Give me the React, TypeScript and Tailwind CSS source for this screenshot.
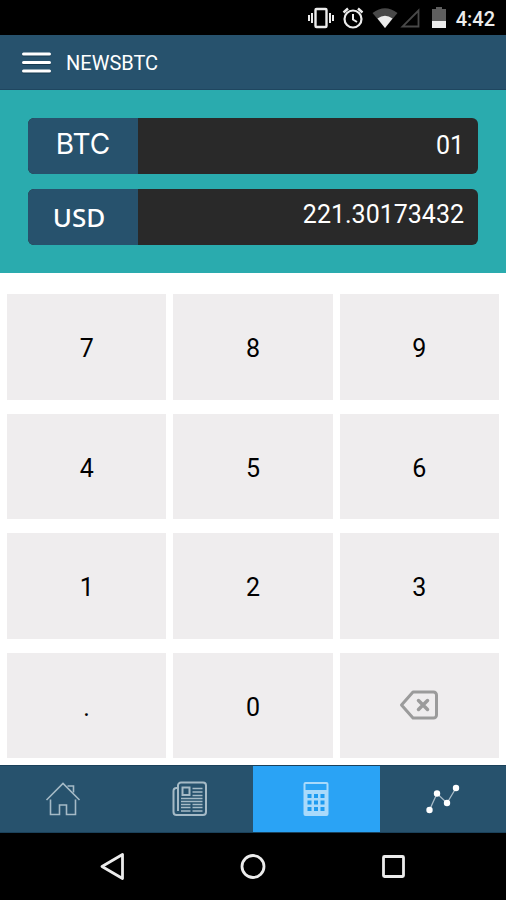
import { useState } from "react";

const RATE = 221.30173432;

const KEYS = ["7", "8", "9", "4", "5", "6", "1", "2", "3", ".", "0"];

const KEY_CLASS =
  "flex items-center justify-center bg-[#efedee] text-[25px] text-black active:bg-[#dddbdc]";

function StatusBar() {
  return (
    <div className="flex h-[35px] items-center justify-end bg-black pr-[11px] text-[#ececec]">
      <svg width="26" height="22" viewBox="0 0 26 22" fill="none" stroke="currentColor">
        <rect x="7.5" y="2" width="11" height="18" rx="1" strokeWidth="2.4" />
        <path d="M4 6v10M22 6v10" strokeWidth="2" />
        <path d="M1 8v6M25 8v6" strokeWidth="2" />
      </svg>

      <svg className="ml-2" width="22" height="22" viewBox="0 0 22 22" fill="none" stroke="currentColor">
        <circle cx="11" cy="12" r="8.5" strokeWidth="2.2" />
        <path d="M11 7v5.5l4 2.500" strokeWidth="2" />
        <path d="M1.500 5.500l4.500-4M20.500 5.500l-4.500-4" strokeWidth="2.4" />
      </svg>

      <svg className="ml-2" width="26" height="20" viewBox="0 0 26 20">
        <path d="M0.5 5Q13 -4.5 25.5 5L13 20Z" fill="#484848" />
        <path d="M5.500 10.500Q13 5 20.500 10.500L13 20Z" fill="currentColor" />
      </svg>

      <svg className="ml-[2px]" width="20" height="20" viewBox="0 0 20 20">
        <path d="M2.500 18.500H18.500V2.500Z" fill="none" stroke="#484848" strokeWidth="1.8" />
      </svg>

      <svg className="ml-3" width="14" height="21" viewBox="0 0 14 21">
        <path d="M4 0h6v2h4v12H0V2h4z" fill="#5e5e5e" />
        <path d="M0 14h14v7H0z" fill="currentColor" />
      </svg>

      <span className="ml-[10px] pt-[2px] text-[20px] leading-6 font-medium">4:42</span>
    </div>
  );
}

function Header() {
  return (
    <header className="flex h-[55px] items-center border-b border-[#1f4660] bg-[#27526d] pl-[21px] text-white">
      <button aria-label="Menu">
        <svg width="31" height="24" viewBox="0 0 31 24" strokeLinecap="round" strokeWidth="3">
          <path d="M2.5 5h26M2.5 13.500h26M2.5 22h26" stroke="#173a50" />
          <path d="M2.5 4h26M2.5 12.500h26M2.5 21h26" stroke="#fff" />
        </svg>
      </button>
      <h1 className="ml-[14px] pt-[2px] text-[20px] leading-6">NEWSBTC</h1>
    </header>
  );
}

function HomeIcon() {
  return (
    <svg width="36" height="36" viewBox="0 0 36 36" fill="none" stroke="#a5bac6" strokeWidth="1.6">
      <path d="M1.500 19L18 2.500l16.500 16.500" />
      <path d="M5.500 18.500V33.500H14.500V24H21.500V33.500H30.500V18.500" />
      <path d="M22.500 5h6v6.500" />
    </svg>
  );
}

function NewsIcon() {
  return (
    <svg width="36" height="36" viewBox="0 0 36 36" fill="none" stroke="#a5bac6">
      <path
        d="M6 30V4.500a3 3 0 0 1 3-3H31a3 3 0 0 1 3 3V31a3 3 0 0 1-3 3H4.500a3 3 0 0 1-3-3V10a3 3 0 0 1 3-3H6"
        strokeWidth="2"
      />
      <rect x="10.500" y="6.500" width="7" height="7.500" strokeWidth="2" />
      <path d="M20.500 7.500h10M20.500 11h10M20.500 14.500h10" strokeWidth="1.500" />
      <path d="M9 17.500h21.500M9 20.500h21.500" strokeWidth="1.500" />
      <path
        d="M9 23.500h9.500M20.500 23.500h10M9 26.500h9.500M20.500 26.500h10M9 30h9.500M20.500 30h10"
        strokeWidth="1.500"
      />
    </svg>
  );
}

function CalculatorIcon() {
  return (
    <svg width="36" height="36" viewBox="0 0 36 36">
      <rect x="5.500" y="1" width="25" height="34" rx="2" fill="#a9dafb" />
      <rect x="7.500" y="3" width="21" height="6" fill="#2aa3f5" />
      <path
        d="M9.500 13h4v4h-4zM16 13h4v4h-4zM22.500 13h4v4h-4zM9.500 19.500h4v4h-4zM16 19.500h4v4h-4zM22.500 19.500h4v4h-4zM9.500 26h4v4h-4zM16 26h4v4h-4zM22.500 26h4v4h-4z"
        fill="#1d9bf0"
      />
    </svg>
  );
}

function ChartIcon() {
  return (
    <svg width="36" height="36" viewBox="0 0 36 36" fill="#fff">
      <path d="M4.500 29L12 12.500L22 22L31 7" fill="none" stroke="#a9bcc8" strokeWidth="1.300" />
      <circle cx="4.500" cy="29" r="3.200" />
      <circle cx="12" cy="12.500" r="3.200" />
      <circle cx="22" cy="22" r="3.200" />
      <circle cx="31" cy="7" r="3.200" />
    </svg>
  );
}

const TABS = [
  { name: "Home", icon: HomeIcon },
  { name: "News", icon: NewsIcon },
  { name: "Calculator", icon: CalculatorIcon },
  { name: "Chart", icon: ChartIcon },
];

export default function App() {
  const [amount, setAmount] = useState("01");
  const [tab, setTab] = useState("Calculator");

  const total = (Number(amount) * RATE).toFixed(8);

  return (
    <div className="flex min-h-screen flex-col bg-white font-[Roboto,sans-serif]">
      <StatusBar />
      <Header />

      <section className="flex flex-col gap-[15px] bg-[#2aabae] px-7 py-7">
        <div className="flex h-[56px] overflow-hidden rounded-md bg-[#292929]">
          <label
            htmlFor="btc"
            className="flex w-[110px] shrink-0 items-center justify-center bg-[#27526d] pb-1 font-[Inter,sans-serif] text-[28px] text-white"
          >
            BTC
          </label>
          <input
            id="btc"
            className="min-w-0 flex-1 pr-[14px] text-right text-[25px] text-white outline-none"
            value={amount}
            onChange={(e) => setAmount(e.target.value)}
          />
        </div>

        <div className="flex h-[56px] overflow-hidden rounded-md bg-[#292929]">
          <label
            htmlFor="usd"
            className="flex w-[110px] shrink-0 items-center justify-center bg-[#27526d] pr-2 font-['Noto_Sans',sans-serif] text-[26px] font-medium text-white"
          >
            USD
          </label>
          <input
            id="usd"
            className="min-w-0 flex-1 pr-[14px] pb-1 text-right text-[25px] text-white outline-none"
            value={total}
            readOnly
          />
        </div>
      </section>

      <main className="grid flex-1 auto-rows-fr grid-cols-3 gap-x-[7px] gap-y-[14px] px-[7px] pt-[21px] pb-[7px]">
        {KEYS.map((key) => (
          <button key={key} className={KEY_CLASS} onClick={() => setAmount(amount + key)}>
            <span className="pt-1">{key}</span>
          </button>
        ))}
        <button
          aria-label="Delete"
          className={KEY_CLASS}
          onClick={() => setAmount(amount.slice(0, -1))}
        >
          <svg
            width="40"
            height="30"
            viewBox="0 0 40 30"
            fill="none"
            stroke="#9b9b9b"
            strokeLinejoin="round"
            strokeLinecap="round"
            strokeWidth="3"
          >
            <path d="M2.500 15L14 2H34.500a3 3 0 0 1 3 3V25a3 3 0 0 1-3 3H14Z" />
            <path d="M19.500 10.500l9 9M28.500 10.500l-9 9" strokeWidth="3.500" />
          </svg>
        </button>
      </main>

      <nav className="grid h-[68px] grid-cols-4 border-y border-[#1b415a] bg-[#27526d]">
        {TABS.map(({ name, icon: Icon }) => (
          <button
            key={name}
            aria-label={name}
            onClick={() => setTab(name)}
            className={
              tab === name
                ? "flex items-center justify-center bg-[#2aa3f5]"
                : "flex items-center justify-center"
            }
          >
            <Icon />
          </button>
        ))}
      </nav>

      <div className="flex h-[67px] items-center justify-center gap-[114px] bg-black">
        <button aria-label="Back">
          <svg width="26" height="28" viewBox="0 0 26 28" fill="none" stroke="#ececec">
            <path d="M2 13.500L22.500 1.500V25.500Z" strokeWidth="2.800" strokeLinejoin="round" />
          </svg>
        </button>
        <button aria-label="Home screen">
          <svg width="26" height="28" viewBox="0 0 26 28" fill="none" stroke="#ececec">
            <circle cx="13" cy="13.500" r="11" strokeWidth="2.800" />
          </svg>
        </button>
        <button aria-label="Recent apps">
          <svg width="26" height="28" viewBox="0 0 26 28" fill="none" stroke="#ececec">
            <rect x="3.500" y="3.500" width="20" height="20" rx="1" strokeWidth="2.800" />
          </svg>
        </button>
      </div>
    </div>
  );
}
